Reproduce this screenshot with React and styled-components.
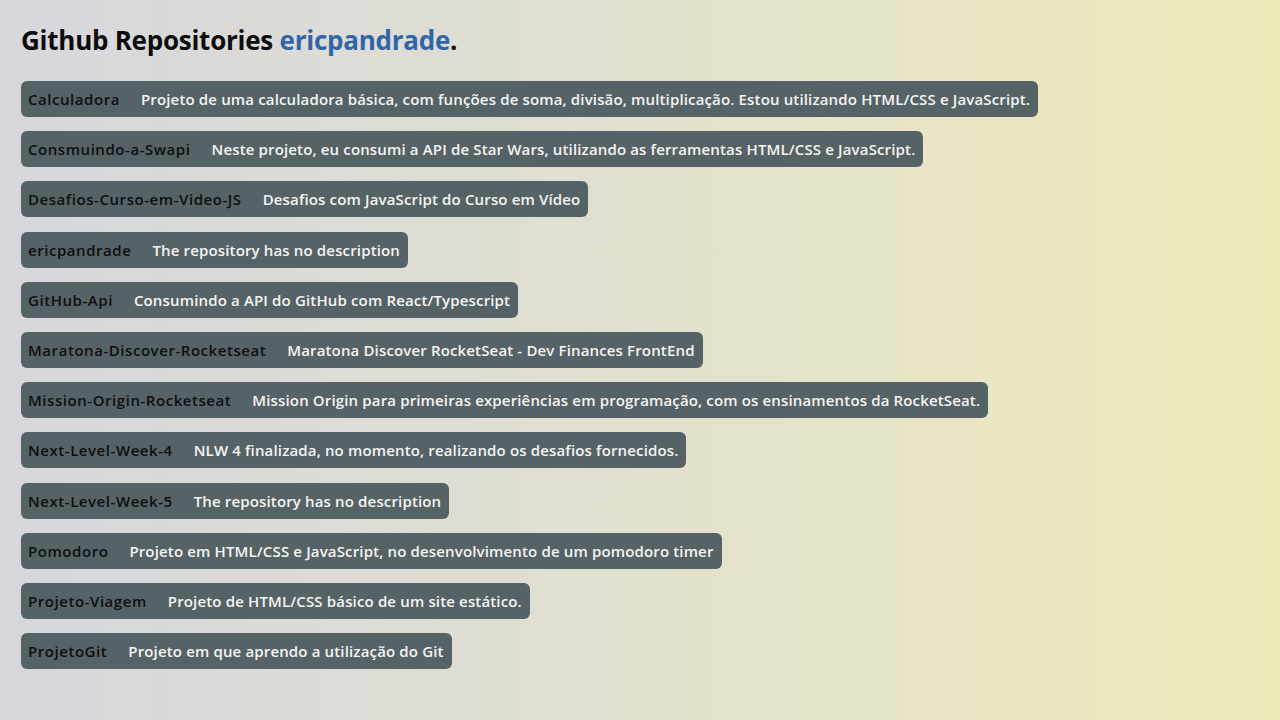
import React from "react";
import styled, { createGlobalStyle } from "styled-components";

const repos = [
  { name: "Calculadora", description: "Projeto de uma calculadora básica, com funções de soma, divisão, multiplicação. Estou utilizando HTML/CSS e JavaScript." },
  { name: "Consmuindo-a-Swapi", description: "Neste projeto, eu consumi a API de Star Wars, utilizando as ferramentas HTML/CSS e JavaScript." },
  { name: "Desafios-Curso-em-Video-JS", description: "Desafios com JavaScript do Curso em Vídeo" },
  { name: "ericpandrade", description: null },
  { name: "GitHub-Api", description: "Consumindo a API do GitHub com React/Typescript" },
  { name: "Maratona-Discover-Rocketseat", description: "Maratona Discover RocketSeat - Dev Finances FrontEnd" },
  { name: "Mission-Origin-Rocketseat", description: "Mission Origin para primeiras experiências em programação, com os ensinamentos da RocketSeat." },
  { name: "Next-Level-Week-4", description: "NLW 4 finalizada, no momento, realizando os desafios fornecidos." },
  { name: "Next-Level-Week-5", description: null },
  { name: "Pomodoro", description: "Projeto em HTML/CSS e JavaScript, no desenvolvimento de um pomodoro timer" },
  { name: "Projeto-Viagem", description: "Projeto de HTML/CSS básico de um site estático." },
  { name: "ProjetoGit", description: "Projeto em que aprendo a utilização do Git" },
];

const GlobalStyle = createGlobalStyle`
  * { box-sizing: border-box; }
  html, body {
    margin: 0;
    padding: 0;
  }
  body {
    min-height: 720px;
    background: linear-gradient(90deg, #d7d6dd 0%, #dfded2 40%, #eeebba 100%);
    font-family: "Open Sans", "Liberation Sans", sans-serif;
  }
`;

const Page = styled.main`
  padding: 22px 21px;
`;

const Title = styled.h1`
  margin: 0 0 23px;
  font-size: 26px;
  font-weight: 700;
  color: #0c0c0c;
  letter-spacing: -0.25px;
`;

const Username = styled.span`
  color: #3066a8;
`;

const List = styled.ul`
  list-style: none;
  margin: 0;
  padding: 0;
  display: flex;
  flex-direction: column;
  align-items: flex-start;
  gap: 14.2px;
`;

const Repo = styled.li`
  display: flex;
  align-items: center;
  gap: 21px;
  height: 36px;
  padding: 0 8px 0 7px;
  background: #566366;
  border-radius: 6px;
  font-size: 15px;
  font-weight: 600;
  letter-spacing: 0.15px;
`;

const Name = styled.span`
  color: #0d0f10;
  letter-spacing: 0.55px;
`;

const Description = styled.span`
  color: #f4f5f2;
`;

export default function App() {
  return (
    <>
      <GlobalStyle />
      <Page>
        <Title>
          Github Repositories <Username>ericpandrade</Username>.
        </Title>
        <List>
          {repos.map((repo) => (
            <Repo key={repo.name}>
              <Name>{repo.name}</Name>
              <Description>{repo.description || "The repository has no description"}</Description>
            </Repo>
          ))}
        </List>
      </Page>
    </>
  );
}
